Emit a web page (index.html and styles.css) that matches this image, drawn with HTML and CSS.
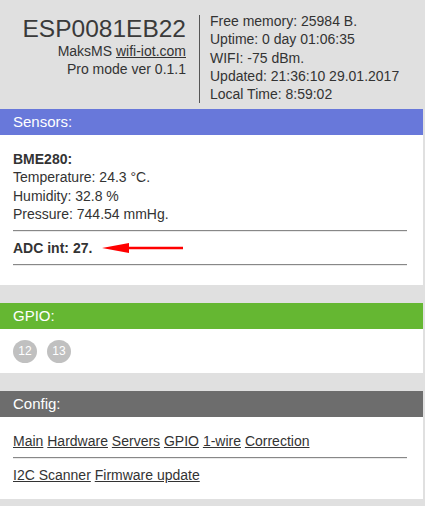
FILE: index.html
```html
<!DOCTYPE html>
<html>
<head>
<meta charset="utf-8">
<link rel="stylesheet" href="styles.css">
</head>
<body>
<div class="page">
  <div class="header">
    <div class="ident">
      <div class="title">ESP0081EB22</div>
      <div class="sub">MaksMS <a href="#">wifi-iot.com</a></div>
      <div class="sub">Pro mode ver 0.1.1</div>
    </div>
    <div class="stats">
      <div>Free memory: 25984 B.</div>
      <div>Uptime: 0 day 01:06:35</div>
      <div>WIFI: -75 dBm.</div>
      <div>Updated: 21:36:10 29.01.2017</div>
      <div>Local Time: 8:59:02</div>
    </div>
  </div>

  <div class="panel">
    <div class="bar bar-blue">Sensors:</div>
    <div class="body sensors">
      <div class="line"><b>BME280:</b></div>
      <div class="line">Temperature: 24.3 °C.</div>
      <div class="line">Humidity: 32.8 %</div>
      <div class="line">Pressure: 744.54 mmHg.</div>
      <hr class="rule">
      <div class="line adc"><b>ADC int:</b> <b>27.</b>
        <svg class="arrow" width="82" height="12" viewBox="0 0 82 12"><path d="M26 6 H81" stroke="#f00" stroke-width="2.5"/><path d="M0 6 L27 1 L27 11 Z" fill="#f00"/></svg>
      </div>
      <hr class="rule">
    </div>
  </div>

  <div class="panel">
    <div class="bar bar-green">GPIO:</div>
    <div class="body gpio">
      <span class="pin">12</span>
      <span class="pin">13</span>
    </div>
  </div>

  <div class="panel">
    <div class="bar bar-dark">Config:</div>
    <div class="body config">
      <div class="links"><a href="#">Main</a> <a href="#">Hardware</a> <a href="#">Servers</a> <a href="#">GPIO</a> <a href="#">1-wire</a> <a href="#">Correction</a></div>
      <hr class="rule">
      <div class="links"><a href="#">I2C Scanner</a> <a href="#">Firmware update</a></div>
    </div>
  </div>
</div>
</body>
</html>
```
FILE: styles.css
```css
html, body {
  margin: 0;
  padding: 0;
  background: #e0e0e0;
}
body {
  font-family: "Liberation Sans", Arial, sans-serif;
  font-size: 14px;
  color: #333;
  height: 506px;
  overflow: hidden;
}
.page {
  width: 423px;
}
.header {
  display: flex;
  height: 109px;
  box-sizing: border-box;
  padding-top: 15px;
}
.ident {
  width: 200px;
  box-sizing: border-box;
  padding-right: 13px;
  text-align: right;
  border-right: 1px solid #555;
  height: 88px;
}
.title {
  font-size: 24.5px;
  line-height: 27px;
  color: #3a3a3a;
}
.sub {
  line-height: 18px;
}
.sub a {
  color: #333;
}
.stats {
  padding-left: 10px;
  line-height: 18.3px;
  margin-top: -3px;
}
.panel {
  background: #fff;
  margin-bottom: 18px;
}
.bar {
  height: 26px;
  line-height: 26px;
  padding-left: 13px;
  color: #fff;
  font-size: 15px;
}
.bar-blue { background: #6878da; }
.bar-green { background: #65b732; }
.bar-dark { background: #6d6d6d; }
.body {
  padding: 13px 16px 15px 13px;
}
.sensors {
  padding-top: 15px;
  padding-bottom: 12px;
}
.line {
  line-height: 18.3px;
}
.rule {
  border: 0;
  border-top: 1px solid #888;
  border-bottom: 1px solid #eaeaea;
  margin: 7px 0 7px;
  height: 0;
}
.adc {
  display: flex;
  align-items: center;
  gap: 4px;
}
.arrow {
  margin-left: 6px;
}
.gpio {
  display: flex;
  gap: 10px;
  padding-top: 11px;
  padding-bottom: 10px;
}
.pin {
  width: 24px;
  height: 23px;
  border-radius: 50%;
  background: #c0c0c0;
  color: #fff;
  font-size: 12px;
  line-height: 23px;
  text-align: center;
}
.config {
  padding-top: 15px;
  padding-bottom: 15px;
}
.links a {
  color: #333;
}
.links {
  line-height: 18px;
}
```
